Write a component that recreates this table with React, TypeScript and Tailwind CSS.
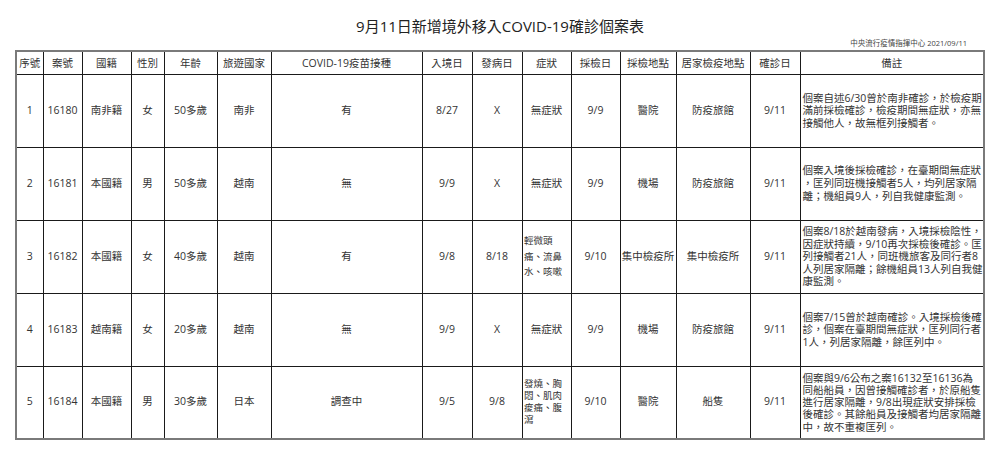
import React from 'react';

type Row = {
  no: string;
  caseId: string;
  nationality: string;
  sex: string;
  age: string;
  travel: string;
  vaccine: string;
  entry: string;
  onset: string;
  symptoms: string[];
  symptomLeading: string;
  testDate: string;
  testPlace: string;
  quarantine: string;
  confirmed: string;
  notes: string[];
  noteLeading: string;
};

const rows: Row[] = [
  {
    no: '1',
    caseId: '16180',
    nationality: '南非籍',
    sex: '女',
    age: '50多歲',
    travel: '南非',
    vaccine: '有',
    entry: '8/27',
    onset: 'X',
    symptoms: ['無症狀'],
    symptomLeading: 'leading-[14px]',
    testDate: '9/9',
    testPlace: '醫院',
    quarantine: '防疫旅館',
    confirmed: '9/11',
    notes: ['個案自述6/30曾於南非確診，於檢疫期', '滿前採檢確診，檢疫期間無症狀，亦無', '接觸他人，故無框列接觸者。'],
    noteLeading: 'leading-[12.2px]',
  },
  {
    no: '2',
    caseId: '16181',
    nationality: '本國籍',
    sex: '男',
    age: '50多歲',
    travel: '越南',
    vaccine: '無',
    entry: '9/9',
    onset: 'X',
    symptoms: ['無症狀'],
    symptomLeading: 'leading-[14px]',
    testDate: '9/9',
    testPlace: '機場',
    quarantine: '防疫旅館',
    confirmed: '9/11',
    notes: ['個案入境後採檢確診，在臺期間無症狀', '，匡列同班機接觸者5人，均列居家隔', '離；機組員9人，列自我健康監測。'],
    noteLeading: 'leading-[12.8px]',
  },
  {
    no: '3',
    caseId: '16182',
    nationality: '本國籍',
    sex: '女',
    age: '40多歲',
    travel: '越南',
    vaccine: '有',
    entry: '9/8',
    onset: '8/18',
    symptoms: ['輕微頭', '痛、流鼻', '水、咳嗽'],
    symptomLeading: 'leading-[15.5px]',
    testDate: '9/10',
    testPlace: '集中檢疫所',
    quarantine: '集中檢疫所',
    confirmed: '9/11',
    notes: [
      '個案8/18於越南發病，入境採檢陰性，',
      '因症狀持續，9/10再次採檢後確診。匡',
      '列接觸者21人，同班機旅客及同行者8',
      '人列居家隔離；餘機組員13人列自我健',
      '康監測。',
    ],
    noteLeading: 'leading-[12.5px]',
  },
  {
    no: '4',
    caseId: '16183',
    nationality: '越南籍',
    sex: '女',
    age: '20多歲',
    travel: '越南',
    vaccine: '無',
    entry: '9/9',
    onset: 'X',
    symptoms: ['無症狀'],
    symptomLeading: 'leading-[14px]',
    testDate: '9/9',
    testPlace: '機場',
    quarantine: '防疫旅館',
    confirmed: '9/11',
    notes: ['個案7/15曾於越南確診。入境採檢後確', '診，個案在臺期間無症狀，匡列同行者', '1人，列居家隔離，餘匡列中。'],
    noteLeading: 'leading-[12.2px]',
  },
  {
    no: '5',
    caseId: '16184',
    nationality: '本國籍',
    sex: '男',
    age: '30多歲',
    travel: '日本',
    vaccine: '調查中',
    entry: '9/5',
    onset: '9/8',
    symptoms: ['發燒、胸', '悶、肌肉', '痠痛、腹', '瀉'],
    symptomLeading: 'leading-[12px]',
    testDate: '9/10',
    testPlace: '醫院',
    quarantine: '船隻',
    confirmed: '9/11',
    notes: [
      '個案與9/6公布之案16132至16136為',
      '同船船員，因曾接觸確診者，於原船隻',
      '進行居家隔離，9/8出現症狀安排採檢',
      '後確診。其餘船員及接觸者均居家隔離',
      '中，故不重複匡列。',
    ],
    noteLeading: 'leading-[12.2px]',
  },
];

const headers = [
  '序號',
  '案號',
  '國籍',
  '性別',
  '年齡',
  '旅遊國家',
  'COVID-19疫苗接種',
  '入境日',
  '發病日',
  '症狀',
  '採檢日',
  '採檢地點',
  '居家檢疫地點',
  '確診日',
  '備註',
];

const cell = 'border border-[#1a1a1a] text-center align-middle p-0';

export default function App() {
  return (
    <div
      className="w-[1000px] h-[453px] bg-white pt-[16px] text-[#333]"
      style={{ fontFamily: '"Open Sans", "Noto Sans CJK TC", sans-serif' }}
    >
      <h1 className="text-center text-[15px] leading-[20px] text-[#222]">9月11日新增境外移入COVID-19確診個案表</h1>
      <div className="mt-[2px] pr-[33px] text-right text-[7.5px] leading-[10px] text-[#444]">
        中央流行疫情指揮中心 2021/09/11
      </div>
      <table className="mt-[2px] ml-[15px] w-[968px] table-fixed border-collapse border-2 border-[#7a7a7a] text-[10.5px]">
        <colgroup>
          <col className="w-[27px]" />
          <col className="w-[39px]" />
          <col className="w-[49px]" />
          <col className="w-[33px]" />
          <col className="w-[53px]" />
          <col className="w-[54px]" />
          <col className="w-[151px]" />
          <col className="w-[50px]" />
          <col className="w-[50px]" />
          <col className="w-[49px]" />
          <col className="w-[49px]" />
          <col className="w-[56px]" />
          <col className="w-[74px]" />
          <col className="w-[50px]" />
          <col className="w-[184px]" />
        </colgroup>
        <thead>
          <tr className="h-[23px]">
            {headers.map((h) => (
              <th key={h} className={`${cell} font-normal leading-[14px] whitespace-nowrap`}>
                {h}
              </th>
            ))}
          </tr>
        </thead>
        <tbody>
          {rows.map((r) => (
            <tr key={r.caseId} className="h-[73px]">
              <td className={cell}>{r.no}</td>
              <td className={cell}>{r.caseId}</td>
              <td className={cell}>{r.nationality}</td>
              <td className={cell}>{r.sex}</td>
              <td className={cell}>{r.age}</td>
              <td className={cell}>{r.travel}</td>
              <td className={cell}>{r.vaccine}</td>
              <td className={cell}>{r.entry}</td>
              <td className={cell}>{r.onset}</td>
              {r.symptoms.length === 1 ? (
                <td className={cell}>{r.symptoms[0]}</td>
              ) : (
                <td className={`${cell} !text-left pl-[1.5px] text-[9.5px] ${r.symptomLeading}`}>
                  {r.symptoms.map((s) => (
                    <div key={s} className="whitespace-nowrap">
                      {s}
                    </div>
                  ))}
                </td>
              )}
              <td className={cell}>{r.testDate}</td>
              <td className={`${cell} whitespace-nowrap`}>{r.testPlace}</td>
              <td className={cell}>{r.quarantine}</td>
              <td className={cell}>{r.confirmed}</td>
              <td className={`${cell} !text-left pl-[2px] ${r.noteLeading}`}>
                {r.notes.map((n) => (
                  <div key={n} className="whitespace-nowrap">
                    {n}
                  </div>
                ))}
              </td>
            </tr>
          ))}
        </tbody>
      </table>
    </div>
  );
}
